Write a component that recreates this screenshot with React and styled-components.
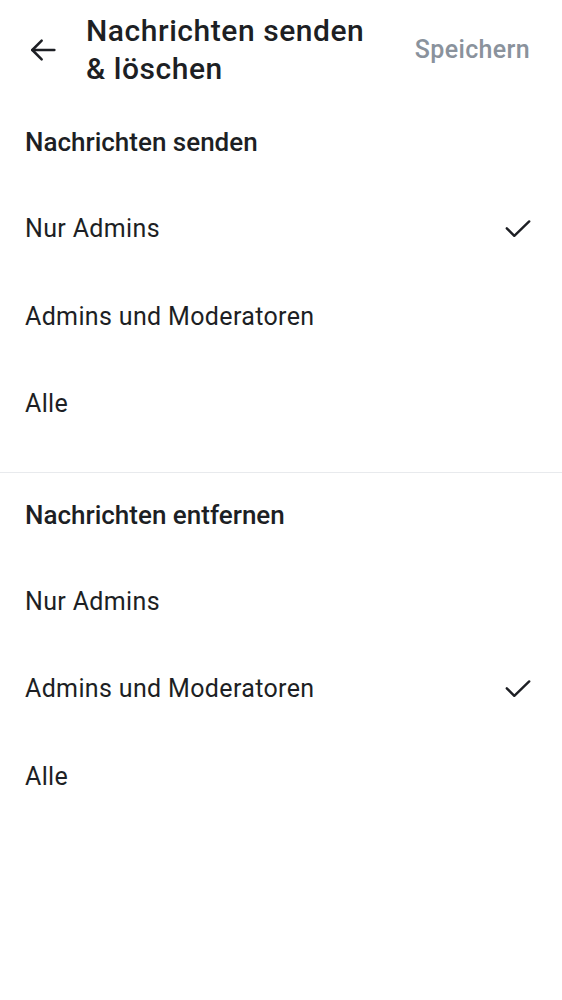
import React, { useState } from "react";
import styled, { createGlobalStyle } from "styled-components";

const GlobalStyle = createGlobalStyle`
  html, body {
    margin: 0;
    padding: 0;
    background: #ffffff;
  }
  body {
    font-family: Roboto, "Noto Sans", sans-serif;
    color: #1d1f24;
  }
`;

const Screen = styled.div`
  width: 562px;
  min-height: 1000px;
  background: #ffffff;
  display: flex;
  flex-direction: column;
`;

const Toolbar = styled.div`
  display: flex;
  align-items: center;
  padding: 12px 32px 0 27px;
`;

const BackButton = styled.button`
  border: 0;
  background: none;
  padding: 0;
  width: 32px;
  height: 32px;
  display: flex;
  align-items: center;
  justify-content: center;
  color: #1d1f24;
  margin-right: 27px;
`;

const Title = styled.h1`
  flex: 1;
  margin: 0;
  font-size: 30px;
  line-height: 38px;
  font-weight: 500;
  letter-spacing: 0.55px;
  color: #1d1f24;
`;

const SaveButton = styled.button`
  border: 0;
  background: none;
  padding: 0;
  font-family: inherit;
  font-size: 25px;
  font-weight: 500;
  letter-spacing: 0.35px;
  color: #8a929c;
  margin-top: -2px;
`;

const Section = styled.section`
  display: flex;
  flex-direction: column;
  padding-top: ${(p) => p.$top}px;
  border-bottom: ${(p) => (p.$divider ? "1px solid #e8eaed" : "none")};
  padding-bottom: ${(p) => (p.$divider ? 24 : 0)}px;
`;

const SectionTitle = styled.h2`
  margin: 0 0 28px;
  padding: 0 25px;
  font-size: 26px;
  line-height: 30px;
  font-weight: 500;
  color: #1d1f24;
`;

const Option = styled.button`
  border: 0;
  background: none;
  font-family: inherit;
  display: flex;
  align-items: center;
  justify-content: space-between;
  height: 87.5px;
  padding: 0 31px 0 25px;
  font-size: 25px;
  font-weight: 400;
  letter-spacing: 0.35px;
  color: #1d1f24;
  text-align: left;
`;

const Arrow = () => (
  <svg width="32" height="32" viewBox="0 0 24 24" fill="none" stroke="currentColor" strokeWidth="1.9" strokeLinecap="round" strokeLinejoin="round">
    <path d="M20.5 12H4" />
    <path d="M11 5l-7 7 7 7" />
  </svg>
);

const Check = () => (
  <svg width="26" height="20" viewBox="0 0 26 20" fill="none" stroke="#1d1f24" strokeWidth="2.4" strokeLinecap="round" strokeLinejoin="round">
    <path d="M1.8 9.3L9.3 16.8L24.2 2.4" />
  </svg>
);

const choices = ["Nur Admins", "Admins und Moderatoren", "Alle"];

const OptionGroup = ({ title, value, onChange, top, divider }) => (
  <Section $top={top} $divider={divider}>
    <SectionTitle>{title}</SectionTitle>
    {choices.map((c) => (
      <Option key={c} onClick={() => onChange(c)}>
        <span>{c}</span>
        {value === c && <Check />}
      </Option>
    ))}
  </Section>
);

export default function App() {
  const [send, setSend] = useState("Nur Admins");
  const [remove, setRemove] = useState("Admins und Moderatoren");

  return (
    <Screen>
      <GlobalStyle />
      <Toolbar>
        <BackButton aria-label="Zurück">
          <Arrow />
        </BackButton>
        <Title>
          Nachrichten senden
          <br />& löschen
        </Title>
        <SaveButton>Speichern</SaveButton>
      </Toolbar>
      <OptionGroup title="Nachrichten senden" value={send} onChange={setSend} top={39} divider />
      <OptionGroup title="Nachrichten entfernen" value={remove} onChange={setRemove} top={27} />
    </Screen>
  );
}
